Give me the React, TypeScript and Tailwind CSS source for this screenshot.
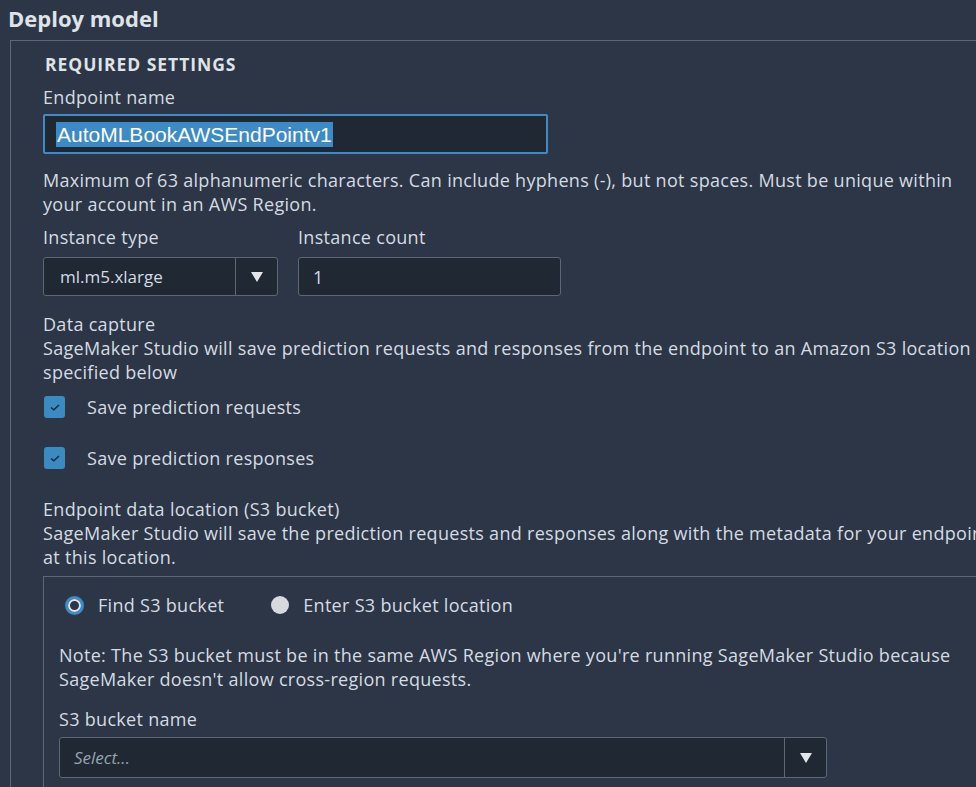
import React from "react"

const txt = "text-[#d5dbe2]"

function Caret() {
    return (
        <svg width="14" height="12" viewBox="0 0 14 12">
            <polygon points="1,1 13,1 7,11" fill="#e3e7ec" />
        </svg>
    )
}

function CheckRow({ label, className }: { label: string; className?: string }) {
    return (
        <div className={"flex items-center h-[24px] " + (className ?? "")}>
            <div className="w-[21px] h-[22px] rounded-[3px] bg-[#3b8bc3] flex items-center justify-center ml-[1px]">
                <svg width="12" height="10" viewBox="0 0 12 10">
                    <path d="M2 5.5 L4.8 7.8 L10 3" stroke="#1d2530" strokeWidth="1.4" fill="none" />
                </svg>
            </div>
            <span className="ml-[22px]">{label}</span>
        </div>
    )
}

export default function App() {
    return (
        <div
            className={"w-[976px] h-[787px] overflow-hidden bg-[#2c3646] text-[18px] tracking-[0.3px] leading-[24px] " + txt}
            style={{ fontFamily: "'Open Sans', 'Noto Sans', sans-serif" }}
        >
            <h1 className="pl-[8px] pt-[4px] h-[40px] text-[22px] tracking-normal leading-[28px] font-bold text-[#dfe3e8]">
                Deploy model
            </h1>

            <div className="ml-[10px] w-[1100px] border-t border-l border-[#5d6775] pl-[32px] pt-[11px]">
                <div className="ml-[2px] h-[24px] font-bold text-[17.5px] tracking-[0.95px] text-[#dfe3e8]">
                    REQUIRED SETTINGS
                </div>

                <div className="mt-[9px]">Endpoint name</div>
                <div className="mt-[5px] w-[505px] h-[40px] bg-[#1f2833] border-2 border-[#3f8ac7] rounded-[2px] flex items-center pl-[11px]">
                    <span
                        className="bg-[#3d8bc6] text-white text-[21px] tracking-normal leading-[25px] px-[1px]"
                        style={{ fontFamily: "'Liberation Sans', Arial, sans-serif" }}
                    >
                        AutoMLBookAWSEndPointv1
                    </span>
                </div>

                <div className="mt-[14px] whitespace-nowrap">
                    Maximum of 63 alphanumeric characters. Can include hyphens (-), but not spaces. Must be unique within
                    <br />
                    your account in an AWS Region.
                </div>

                <div className="mt-[9px] flex gap-[20px]">
                    <div className="flex flex-col">
                        <div>Instance type</div>
                        <div className="mt-[8px] w-[235px] h-[39px] bg-[#1f2833] border border-[#5d6775] rounded-[3px] flex">
                            <div className="flex-1 flex items-center pl-[16px] text-[17px] tracking-normal">ml.m5.xlarge</div>
                            <div className="w-[42px] border-l border-[#5d6775] flex items-center justify-center">
                                <Caret />
                            </div>
                        </div>
                    </div>
                    <div className="flex flex-col">
                        <div>Instance count</div>
                        <div className="mt-[8px] w-[263px] h-[39px] bg-[#1f2833] border border-[#5d6775] rounded-[3px] flex items-center pl-[14px]">
                            1
                        </div>
                    </div>
                </div>

                <div className="mt-[16px] whitespace-nowrap">
                    Data capture
                    <br />
                    SageMaker Studio will save prediction requests and responses from the endpoint to an Amazon S3 location
                    <br />
                    specified below
                </div>

                <CheckRow label="Save prediction requests" className="mt-[11px]" />
                <CheckRow label="Save prediction responses" className="mt-[27px]" />

                <div className="mt-[27px] whitespace-nowrap">
                    Endpoint data location (S3 bucket)
                    <br />
                    SageMaker Studio will save the prediction requests and responses along with the metadata for your endpoint
                    <br />
                    at this location.
                </div>

                <div className="mt-[7px] w-[1100px] h-[300px] border-t border-l border-[#5d6775] pl-[15px] pt-[16px]">
                    <div className="flex items-center h-[24px] pl-[6px]">
                        <div className="w-[19px] h-[19px] rounded-full border-[3px] border-[#3c8cc8] bg-[#2c3646] flex items-center justify-center">
                            <div className="w-[13px] h-[13px] rounded-full border-2 border-[#dfe3e8]" />
                        </div>
                        <span className="ml-[14px]">Find S3 bucket</span>
                        <div className="ml-[47px] w-[18px] h-[18px] rounded-full bg-[#d6d9de]" />
                        <span className="ml-[14px]">Enter S3 bucket location</span>
                    </div>

                    <div className="mt-[26px] whitespace-nowrap">
                        Note: The S3 bucket must be in the same AWS Region where you're running SageMaker Studio because
                        <br />
                        SageMaker doesn't allow cross-region requests.
                    </div>

                    <div className="mt-[16px]">S3 bucket name</div>
                    <div className="mt-[6px] w-[768px] h-[41px] bg-[#1f2833] border border-[#5d6775] rounded-[3px] flex">
                        <div className="flex-1 flex items-center pl-[14px] italic text-[17px] tracking-normal text-[#9aa3ae]">Select...</div>
                        <div className="w-[42px] border-l border-[#5d6775] flex items-center justify-center">
                            <Caret />
                        </div>
                    </div>
                </div>
            </div>
        </div>
    )
}
